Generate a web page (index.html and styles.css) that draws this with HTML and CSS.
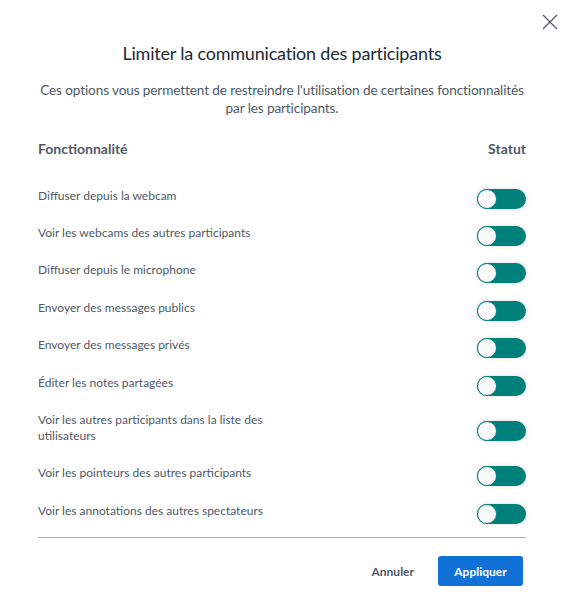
FILE: index.html
```html
<!DOCTYPE html>
<html lang="fr">
<head>
<meta charset="utf-8">
<link rel="stylesheet" href="styles.css">
</head>
<body>
<div class="modal">
  <button class="close" aria-label="Fermer">
    <svg width="16" height="16" viewBox="0 0 16 16"><path d="M1 1L15 15M15 1L1 15" stroke="#4e5a66" stroke-width="1.3" fill="none"/></svg>
  </button>
  <h1 class="title">Limiter la communication des participants</h1>
  <p class="desc">Ces options vous permettent de restreindre l'utilisation de certaines fonctionnalités par les participants.</p>
  <div class="head">
    <span>Fonctionnalité</span>
    <span>Statut</span>
  </div>
  <ul class="rows">
    <li class="row"><span class="label">Diffuser depuis la webcam</span><span class="toggle"><span class="knob"></span></span></li>
    <li class="row"><span class="label">Voir les webcams des autres participants</span><span class="toggle"><span class="knob"></span></span></li>
    <li class="row"><span class="label">Diffuser depuis le microphone</span><span class="toggle"><span class="knob"></span></span></li>
    <li class="row"><span class="label">Envoyer des messages publics</span><span class="toggle"><span class="knob"></span></span></li>
    <li class="row"><span class="label">Envoyer des messages privés</span><span class="toggle"><span class="knob"></span></span></li>
    <li class="row"><span class="label">Éditer les notes partagées</span><span class="toggle"><span class="knob"></span></span></li>
    <li class="row"><span class="label">Voir les autres participants dans la liste des utilisateurs</span><span class="toggle"><span class="knob"></span></span></li>
    <li class="row"><span class="label">Voir les pointeurs des autres participants</span><span class="toggle"><span class="knob"></span></span></li>
    <li class="row"><span class="label">Voir les annotations des autres spectateurs</span><span class="toggle"><span class="knob"></span></span></li>
  </ul>
  <div class="footer">
    <button class="btn cancel">Annuler</button>
    <button class="btn apply">Appliquer</button>
  </div>
</div>
</body>
</html>
```
FILE: styles.css
```css
html, body {
  margin: 0;
  padding: 0;
  background: #fff;
}
body {
  font-family: "Source Sans Pro", Lato, "Liberation Sans", sans-serif;
  color: #4e5a66;
}
.modal {
  position: relative;
  width: 488px;
  padding: 40px 51px 0 38px;
}
.close {
  position: absolute;
  top: 14px;
  right: 19px;
  border: 0;
  background: none;
  padding: 0;
  width: 16px;
  height: 16px;
}
.title {
  margin: 0;
  font-size: 18px;
  font-weight: 400;
  letter-spacing: -0.2px;
  color: #222a33;
  text-align: center;
  line-height: 26px;
}
.desc {
  margin: 15px 0 0;
  font-size: 13.6px;
  letter-spacing: -0.12px;
  line-height: 18px;
  text-align: center;
  color: #4e5a66;
}
.head {
  display: flex;
  justify-content: space-between;
  font-size: 14px;
  font-weight: 700;
  margin-top: 23px;
  line-height: 18px;
}
.rows {
  list-style: none;
  margin: 19px 0 0;
  padding: 0;
}
.row {
  display: flex;
  justify-content: space-between;
  align-items: center;
  padding: 10.7px 0;
  font-size: 12px;
  line-height: 16px;
}
.label {
  max-width: 240px;
}
.toggle {
  position: relative;
  flex: none;
  width: 49px;
  height: 20px;
  margin: 1px 0 -5px;
  border-radius: 10px;
  background: #00807b;
  box-shadow: 0 0 4px rgba(0,0,0,0.15);
}
.knob {
  position: absolute;
  left: 0;
  top: 0;
  width: 18px;
  height: 18px;
  border-radius: 50%;
  background: #fafafa;
  border: 1px solid #00807b;
}
.footer {
  margin-top: 8px;
  border-top: 1px solid #a7adb3;
  display: flex;
  justify-content: flex-end;
  align-items: center;
  gap: 24px;
  padding: 18px 3px 0 0;
}
.btn {
  font-family: inherit;
  font-size: 12px;
  font-weight: 700;
  border: 0;
  border-radius: 3px;
  cursor: pointer;
}
.cancel {
  background: none;
  color: #4e5a66;
  padding: 0;
}
.apply {
  background: #1271d6;
  color: #fff;
  width: 85px;
  height: 30px;
}
```
